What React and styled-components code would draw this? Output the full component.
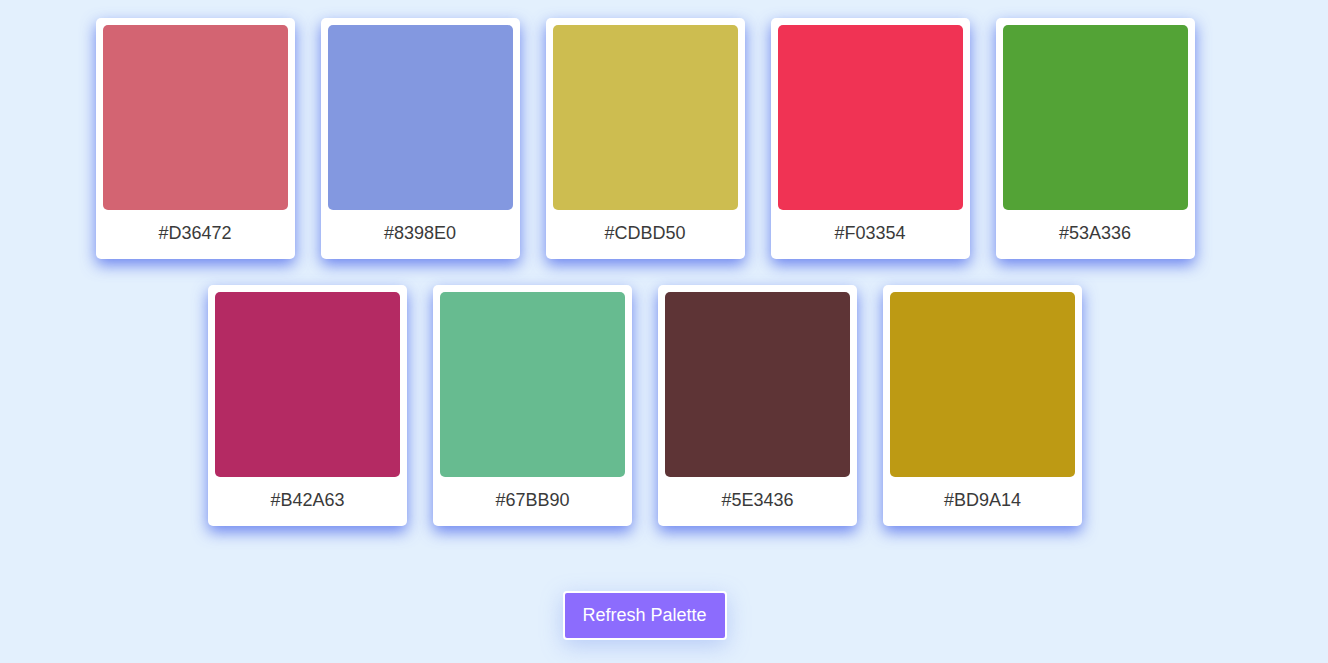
import React from "react";
import styled, { createGlobalStyle } from "styled-components";

const colors = [
  ["#D36472", "#8398E0", "#CDBD50", "#F03354", "#53A336"],
  ["#B42A63", "#67BB90", "#5E3436", "#BD9A14"],
];

const App = () => {
  return (
    <>
      <GlobalStyle />
      <Page>
        <Palette>
          {colors.map((row, i) => (
            <Row key={i}>
              {row.map((hex) => (
                <Card key={hex}>
                  <Swatch $color={hex} />
                  <Code>{hex}</Code>
                </Card>
              ))}
            </Row>
          ))}
        </Palette>
        <RefreshButton>Refresh Palette</RefreshButton>
      </Page>
    </>
  );
};

export default App;

const GlobalStyle = createGlobalStyle`
  html, body {
    margin: 0;
    background: #e3f0fd;
    font-family: "Liberation Sans", Arial, sans-serif;
  }
`;

const Page = styled.main`
  display: flex;
  flex-direction: column;
  align-items: center;
  width: 1290px;
  min-height: 663px;
  padding-top: 18px;
  box-sizing: border-box;
`;

const Palette = styled.div`
  display: flex;
  flex-direction: column;
  align-items: center;
  gap: 26px;
`;

const Row = styled.div`
  display: flex;
  gap: 26px;
`;

const Card = styled.div`
  width: 199px;
  height: 241px;
  box-sizing: border-box;
  padding: 7px;
  background: #fff;
  border-radius: 5px;
  box-shadow: 0 6px 15px rgba(70, 98, 235, 0.75);
  display: flex;
  flex-direction: column;
`;

const Swatch = styled.div`
  width: 185px;
  height: 185px;
  border-radius: 5px;
  background: ${(p) => p.$color};
`;

const Code = styled.div`
  flex: 1;
  display: flex;
  align-items: center;
  justify-content: center;
  padding-top: 4px;
  font-size: 18px;
  color: #3a3a3a;
`;

const RefreshButton = styled.button`
  margin-top: 65px;
  margin-right: 1px;
  width: 164px;
  height: 49px;
  border: 2px solid #fff;
  border-radius: 4px;
  background: #8c6cfd;
  color: #fff;
  font-family: "Liberation Sans", Arial, sans-serif;
  font-size: 18px;
  box-shadow: 0 6px 22px rgba(120, 150, 240, 0.4);
  cursor: pointer;
`;
